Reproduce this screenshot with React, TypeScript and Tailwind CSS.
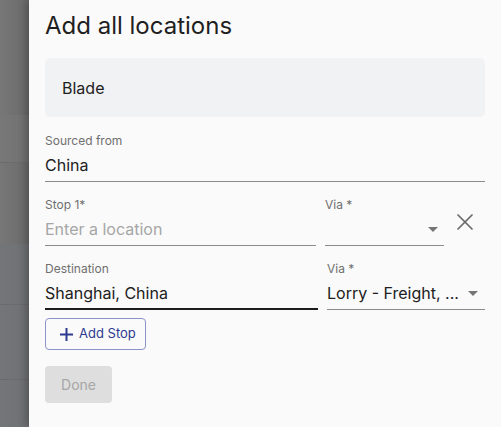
import { X } from 'lucide-react';

function Caret() {
  return (
    <svg width="10" height="5" viewBox="0 0 10 5" className="shrink-0">
      <path d="M0 0h10L5 5z" fill="#757575" />
    </svg>
  );
}

function Field({
  label,
  value,
  placeholder,
  focused,
  className = '',
}: {
  label: string;
  value?: string;
  placeholder?: string;
  focused?: boolean;
  className?: string;
}) {
  return (
    <div className={className}>
      <div className="h-[17px] pt-px text-[12px] leading-4 text-[#6f6f6f]">{label}</div>
      <div
        className={
          'mt-1 ' +
          (focused
            ? 'h-[29px] border-b-2 border-[#1c1c1c] pb-[3px]'
            : 'h-[29px] border-b border-[#8c8c8c] pb-1')
        }
      >
        {value ? (
          <div className="text-[16px] leading-6 text-[#212121]">{value}</div>
        ) : (
          <div className="text-[16px] leading-6 text-[#a6a6a6]">{placeholder}</div>
        )}
      </div>
    </div>
  );
}

function SelectField({
  value,
  className = '',
  caretPad,
}: {
  value?: string;
  className?: string;
  caretPad: string;
}) {
  return (
    <div className={className}>
      <div className="h-[17px] pt-px text-[12px] leading-4 text-[#6f6f6f]">Via *</div>
      <div className={'mt-1 flex h-[29px] items-center border-b border-[#8c8c8c] pb-1 ' + caretPad}>
        <div className="flex-1 truncate text-[16px] leading-6 text-[#212121]">{value}</div>
        <Caret />
      </div>
    </div>
  );
}

export default function App() {
  return (
    <div className="flex h-[427px] w-[501px] overflow-hidden font-['Inter',sans-serif]">
      {/* dimmed page behind the drawer */}
      <div className="flex w-[29px] shrink-0 flex-col bg-gradient-to-r from-[#777777] to-[#6a6a6a]">
        <div className="h-[115px]" />
        <div className="h-[48px] border-b border-[#6b6b6b] bg-[#7a7a7a]/40" />
        <div className="h-[81px]" />
        <div className="h-[61px] border-b border-[#6b6b6b] bg-[#737579]/60" />
        <div className="h-[75px] border-b border-[#6b6b6b] bg-[#737579]/60" />
        <div className="flex-1 bg-[#737579]/60" />
      </div>

      <div className="flex-1 bg-[#fafafa] px-4 pt-[10px] shadow-[-3px_0_8px_rgba(0,0,0,0.25)]">
        <h1 className="text-[24px] leading-8 text-[#1f1f1f]">Add all locations</h1>

        <div className="mt-4 flex h-[59px] items-center rounded-[5px] bg-[#f1f2f4] pl-[17px] text-[16px] text-[#212121]">
          Blade
        </div>

        <Field label="Sourced from" value="China" className="mt-[15px]" />

        <div className="mt-[14px] flex items-start">
          <Field label="Stop 1*" placeholder="Enter a location" className="w-[271px]" />
          <SelectField className="ml-[9px] w-[119px]" caretPad="pr-[6px]" />
          <div className="flex flex-1 justify-center pt-3">
            <X size={28} strokeWidth={1.5} color="#6b6b6b" />
          </div>
        </div>

        <div className="mt-[14px] flex items-start">
          <Field label="Destination" value="Shanghai, China" focused className="w-[273px]" />
          <SelectField value="Lorry - Freight, ..." className="ml-[9px] flex-1" caretPad="pr-[7px]" />
        </div>

        <button className="mt-2 flex h-8 w-[101px] items-center rounded border border-[#8b93c7] pl-[14px] text-[13px] text-[#2c3a8f]">
          <svg width="13" height="13" viewBox="0 0 13 13" className="mr-[6px]">
            <path d="M6.5 0v13M0 6.5h13" stroke="#2c3a8f" strokeWidth="2" />
          </svg>
          Add Stop
        </button>

        <button className="mt-4 h-[37px] w-[67px] rounded bg-[#dedede] text-[14px] text-[#a6a6a6]">
          Done
        </button>
      </div>
    </div>
  );
}
